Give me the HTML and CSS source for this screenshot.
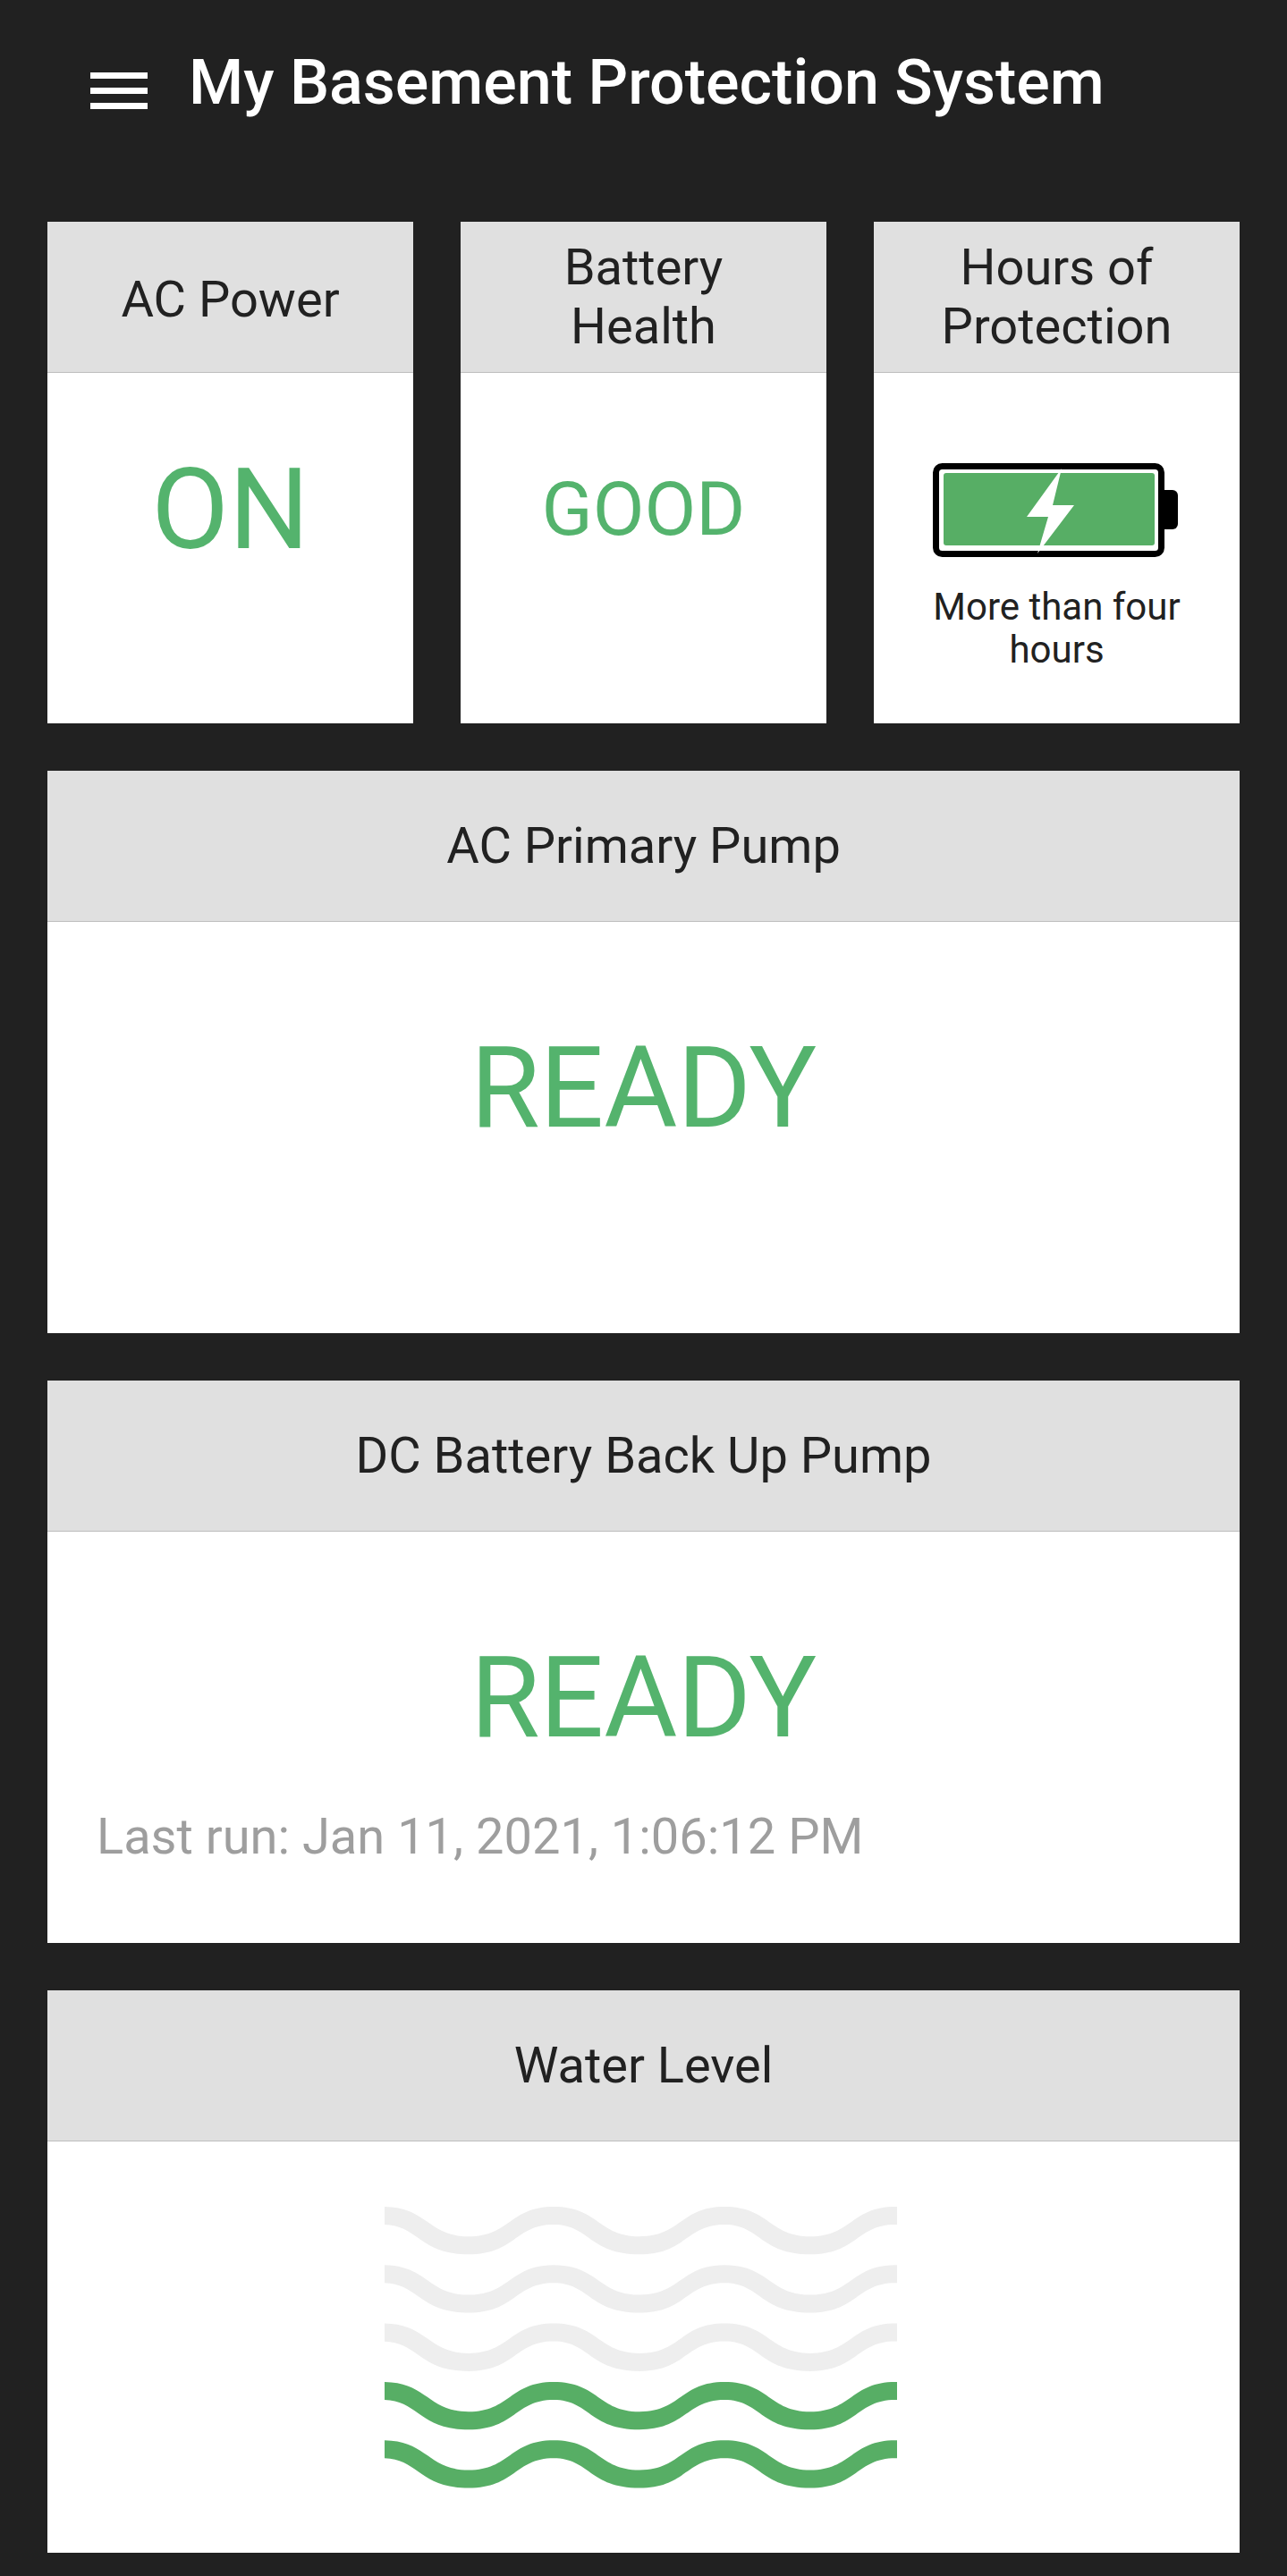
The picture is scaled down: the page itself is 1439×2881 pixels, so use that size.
FILE: index.html
```html
<!DOCTYPE html>
<html lang="en">
<head>
  <meta charset="UTF-8">
  <meta name="viewport" content="width=device-width, initial-scale=1.0">
  <title>My Basement Protection System</title>
  <link rel="stylesheet" href="styles.css">
</head>
<body>

  <header class="topbar">
    <div class="menu-icon"><span></span><span></span><span></span></div>
    <h1 class="topbar-title">My Basement Protection System</h1>
  </header>

  <main class="dashboard">
    <div class="small-cards">
      <section class="card small">
        <h2 class="card-head single">AC Power</h2>
        <div class="card-body"><div class="status big">ON</div></div>
      </section>
      <section class="card small">
        <h2 class="card-head">Battery Health</h2>
        <div class="card-body"><div class="status medium">GOOD</div></div>
      </section>
      <section class="card small">
        <h2 class="card-head">Hours of Protection</h2>
        <div class="card-body protection">
          <svg class="battery" viewBox="0 0 274 105" aria-hidden="true">
            <rect x="3.5" y="3.5" width="252" height="98" rx="7" fill="#fff" stroke="#000" stroke-width="7"/>
            <path d="M259 30h9a6 6 0 0 1 6 6v32a6 6 0 0 1-6 6h-9z" fill="#000"/>
            <rect x="12" y="11" width="236" height="81" rx="3" fill="#57ae65"/>
            <path d="M144 6 105 60h24l-12 41 41-54h-24z" fill="#fff"/>
          </svg>
          <p class="protection-text">More than four hours</p>
        </div>
      </section>
    </div>

    <section class="card">
      <h2 class="card-head">AC Primary Pump</h2>
      <div class="card-body"><div class="status big">READY</div></div>
    </section>

    <section class="card">
      <h2 class="card-head">DC Battery Back Up Pump</h2>
      <div class="card-body">
        <div class="status big">READY</div>
        <p class="last-run">Last run: Jan 11, 2021, 1:06:12 PM</p>
      </div>
    </section>

    <section class="card">
      <h2 class="card-head">Water Level</h2>
      <div class="card-body water">
        <svg class="waves" viewBox="0 0 573 315" aria-hidden="true">
          <defs>
            <path id="wave" d="M-2 0C48 0 48 33.300 94 33.300C140 33.300 140 0 189 0C239 0 239 33.300 285 33.300C331 33.300 331 0 380 0C430 0 430 33.300 476 33.300C522 33.300 522 0 571 0H581V20H571C528 20 528 53.300 476 53.300C420 53.300 420 20 380 20C337 20 337 53.300 285 53.300C229 53.300 229 20 189 20C146 20 146 53.300 94 53.300C38 53.300 38 20-2 20Z"/>
          </defs>
          <use href="#wave" y="0" class="wave-off"/>
          <use href="#wave" y="65.300" class="wave-off"/>
          <use href="#wave" y="130.600" class="wave-off"/>
          <use href="#wave" y="195.900" class="wave-on"/>
          <use href="#wave" y="261.200" class="wave-on"/>
        </svg>
      </div>
    </section>
  </main>

</body>
</html>
```

FILE: styles.css
```css
body {
  margin: 0;
  background-color: #212121;
  font-family: Roboto, "Liberation Sans", sans-serif;
  color: #212121;
}

.topbar {
  display: flex;
  align-items: center;
  height: 184px;
  padding-left: 101px;
  box-sizing: border-box;
}

.menu-icon {
  display: flex;
  flex-direction: column;
  gap: 10px;
  width: 64px;
  margin-top: 18px;
  margin-right: 46px;
}

.menu-icon span {
  display: block;
  height: 7px;
  background-color: #fff;
}

.topbar-title {
  margin: 0;
  font-size: 70px;
  font-weight: 500;
  color: #fff;
}

.dashboard {
  display: flex;
  flex-direction: column;
  gap: 53px;
  padding: 64px 53px 25px;
}

.small-cards {
  display: grid;
  grid-template-columns: repeat(3, 409px);
  gap: 53px;
}

.card {
  display: flex;
  flex-direction: column;
  height: 629px;
  background-color: #fff;
}

.card.small {
  height: 561px;
}

.card-head {
  display: flex;
  align-items: center;
  justify-content: center;
  box-sizing: border-box;
  height: 169px;
  margin: 0;
  padding: 0 40px;
  background-color: #e0e0e0;
  border-bottom: 1px solid #bdbdbd;
  font-size: 56px;
  font-weight: 400;
  line-height: 66px;
  text-align: center;
}

.card-head.single {
  padding-top: 5px;
}

.card-body {
  flex: 1;
  padding: 0 55px;
}

.status {
  color: #54b36d;
  text-align: center;
}

.status.big {
  margin-top: 116px;
  font-size: 126px;
  line-height: 140px;
}

.small .status.big {
  margin-top: 83px;
}

.status.medium {
  margin-top: 83px;
  font-size: 84px;
  line-height: 140px;
}

.last-run {
  margin: 52px 0 0;
  font-size: 56px;
  color: #9e9e9e;
}

.protection {
  padding: 101px 0 0;
  text-align: center;
}

.battery {
  display: block;
  width: 274px;
  height: 105px;
  margin-left: 66px;
}

.protection-text {
  margin: 32px 40px 0;
  font-size: 42px;
  line-height: 48px;
}

.water {
  display: flex;
  justify-content: center;
  padding: 0;
}

.waves {
  width: 573px;
  height: 315px;
  margin-top: 73px;
  margin-right: 6px;
}

.wave-off {
  fill: #eeeeee;
}

.wave-on {
  fill: #57ae65;
}
```
